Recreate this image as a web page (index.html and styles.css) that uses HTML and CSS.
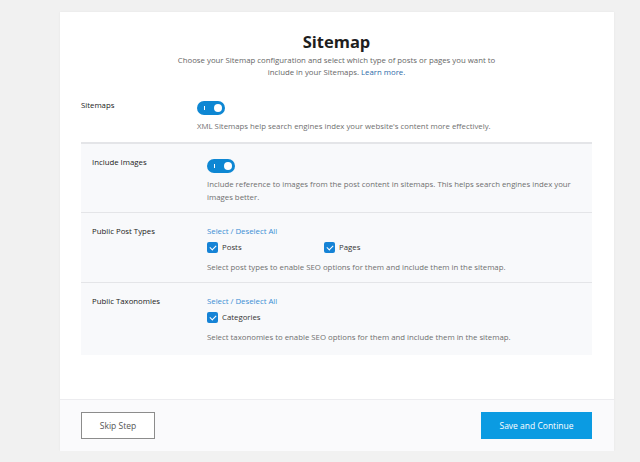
FILE: index.html
```html
<!DOCTYPE html>
<html lang="en">

<head>
    <meta charset="UTF-8">
    <meta name="viewport" content="width=device-width, initial-scale=1.0">
    <title>Sitemap</title>
    <link rel="stylesheet" href="styles.css">
</head>

<body>
    <div class="card">
        <div class="card-body">
            <div class="header">
                <h1>Sitemap</h1>
                <p>Choose your Sitemap configuration and select which type of posts or pages you want to<br>
                    include in your Sitemaps. <a href="#">Learn more.</a></p>
            </div>

            <div class="row top-row">
                <div class="label">Sitemaps</div>
                <div class="control">
                    <span class="toggle"></span>
                    <p class="desc">XML Sitemaps help search engines index your website's content more effectively.</p>
                </div>
            </div>

            <div class="box">
                <div class="row">
                    <div class="label">Include Images</div>
                    <div class="control">
                        <span class="toggle"></span>
                        <p class="desc">Include reference to images from the post content in sitemaps. This helps search engines index your images better.</p>
                    </div>
                </div>
                <div class="row">
                    <div class="label">Public Post Types</div>
                    <div class="control">
                        <a href="#" class="select-all">Select / Deselect All</a>
                        <div class="checks">
                            <label class="check"><span class="box-check"></span>Posts</label>
                            <label class="check"><span class="box-check"></span>Pages</label>
                        </div>
                        <p class="desc">Select post types to enable SEO options for them and include them in the sitemap.</p>
                    </div>
                </div>
                <div class="row">
                    <div class="label">Public Taxonomies</div>
                    <div class="control">
                        <a href="#" class="select-all">Select / Deselect All</a>
                        <div class="checks">
                            <label class="check"><span class="box-check"></span>Categories</label>
                        </div>
                        <p class="desc">Select taxonomies to enable SEO options for them and include them in the sitemap.</p>
                    </div>
                </div>
            </div>
        </div>

        <div class="footer">
            <button class="btn skip">Skip Step</button>
            <button class="btn save">Save and Continue</button>
        </div>
    </div>
</body>

</html>
```

FILE: styles.css
```css
* {
    margin: 0;
    padding: 0;
    box-sizing: border-box;
    font-family: 'Open Sans', 'Noto Sans', sans-serif;
}

body {
    background-color: #f1f1f1;
    padding: 12px 26px 0 60px;
}

.card {
    width: 554px;
    background: #fff;
    box-shadow: 0 0 2px rgba(0, 0, 0, 0.06);
}

.card-body {
    padding: 19px 22px 44px 21px;
}

.header {
    text-align: center;
    margin-bottom: 20px;
}

.header h1 {
    font-size: 16.5px;
    line-height: 21px;
    font-weight: 700;
    color: #1e1e1e;
}

.header p {
    font-size: 7.8px;
    line-height: 12px;
    color: #666;
    margin-top: 2px;
}

.header a {
    color: #2c6aa8;
    text-decoration: none;
}

.row {
    display: flex;
    padding: 12px 11px 8px;
    border-bottom: 1px solid #e4e5e8;
}

.row:last-child {
    border-bottom: 0;
    padding-bottom: 11px;
}

.top-row {
    padding: 0 0 9px;
}

.label {
    width: 115px;
    flex-shrink: 0;
    font-size: 7.8px;
    line-height: 13px;
    color: #1a1a1a;
}

.top-row .label {
    width: 116px;
    padding-top: 1px;
}

.control {
    flex: 1;
    font-size: 7.8px;
    line-height: 13px;
}

.desc {
    color: #6f6f6f;
    margin-top: 5px;
}

.toggle {
    display: block;
    position: relative;
    width: 28px;
    height: 14px;
    margin-top: 3px;
    border-radius: 7px;
    background: #0e87d3;
}

.toggle::before {
    content: "";
    position: absolute;
    left: 7px;
    top: 5px;
    width: 1px;
    height: 4px;
    background: #fff;
}

.toggle::after {
    content: "";
    position: absolute;
    right: 3px;
    top: 3px;
    width: 8px;
    height: 8px;
    border-radius: 50%;
    background: #fff;
}

.box {
    background: #f8f9fb;
    border-top: 1px solid #e4e5e8;
}

.select-all {
    display: block;
    color: #3a8ed4;
    text-decoration: none;
}

.checks {
    display: flex;
    margin-top: 3px;
}

.check {
    display: flex;
    align-items: center;
    width: 117px;
    color: #333;
}

.box-check {
    position: relative;
    width: 11px;
    height: 11px;
    margin-right: 4px;
    border-radius: 2px;
    background: #1583d6;
}

.box-check::after {
    content: "";
    position: absolute;
    left: 3.5px;
    top: 1.5px;
    width: 3px;
    height: 5px;
    border: solid #fff;
    border-width: 0 1.5px 1.5px 0;
    transform: rotate(45deg);
}

.checks + .desc {
    margin-top: 7px;
}

.footer {
    display: flex;
    justify-content: space-between;
    padding: 12px 22px 12px 21px;
    background: #fafafc;
    border-top: 1px solid #ececef;
}

.btn {
    height: 27px;
    font-size: 8.5px;
    cursor: pointer;
}

.skip {
    width: 74px;
    background: #fff;
    color: #555;
    border: 1px solid #8c8c8c;
}

.save {
    width: 111px;
    background: #0b9be2;
    color: #fff;
    border: 0;
}
```
